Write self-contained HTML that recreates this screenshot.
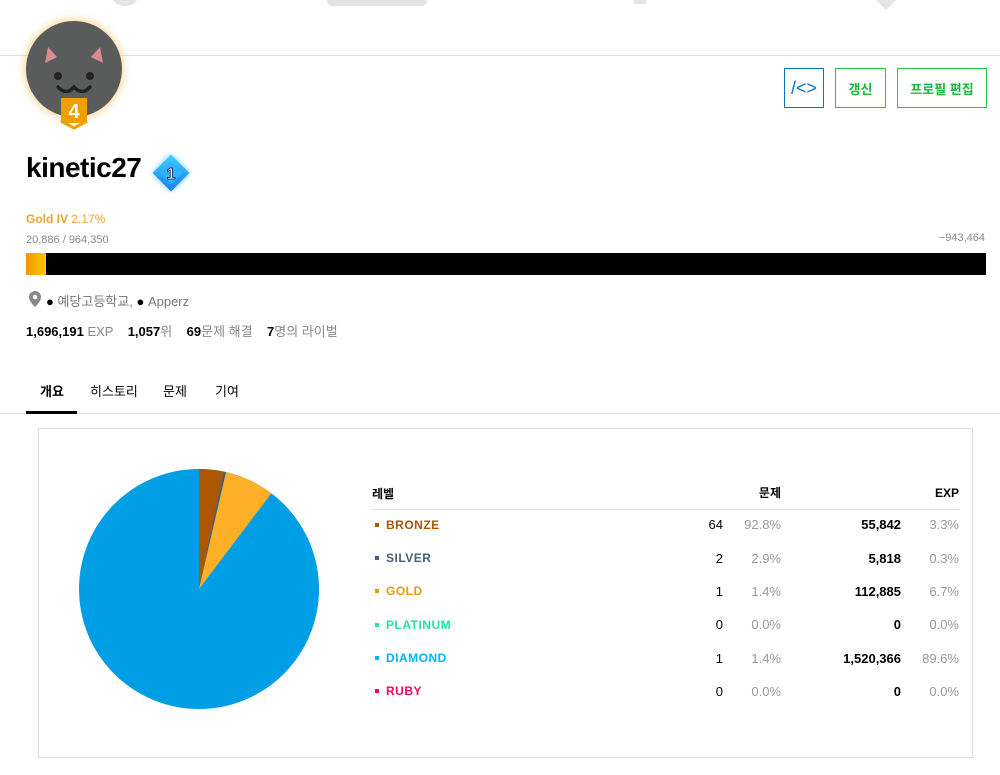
<!DOCTYPE html>
<html><head><meta charset="utf-8"><style>
*{margin:0;padding:0;box-sizing:border-box}
body{width:1000px;height:775px;background:#fff;font-family:"Liberation Sans","Noto Sans CJK KR",sans-serif;position:relative;overflow:hidden;color:#000}
.a{position:absolute;white-space:nowrap}
.btn{position:absolute;top:68px;height:40px;border:1px solid #1fc83e;color:#16b83a;font-size:13px;font-weight:bold;display:flex;align-items:center;justify-content:center}
.r{position:absolute;font-size:13px;line-height:16px;text-align:right}
.g{color:#999}
.nm{position:absolute;left:386px;font-size:12px;font-weight:bold;letter-spacing:.5px}
.bl{position:absolute;left:375px;width:4px;height:4px}
</style></head><body>
<div class="a" style="left:112px;top:-14px;width:26px;height:20px;border-radius:50%;background:#e4e4e4"></div>
<div class="a" style="left:327px;top:-10px;width:100px;height:16px;border-radius:5px;background:#e4e4e4"></div>
<div class="a" style="left:634px;top:0;width:12px;height:4px;background:#e4e4e4"></div>
<div class="a" style="left:876px;top:0;width:0;height:0;border-left:10px solid transparent;border-right:10px solid transparent;border-top:10px solid #e4e4e4"></div>
<div class="a" style="left:0;top:55px;width:1000px;height:1px;background:#ddd"></div>
<div class="a" style="left:26px;top:21px;width:96px;height:96px;border-radius:50%;background:#5a5b5b;box-shadow:0 0 8px 2px rgba(255,190,90,.6)"></div>
<svg class="a" style="left:26px;top:21px" width="96" height="110" viewBox="0 0 96 110">
<polygon points="19,42 22,26 31,36" fill="#d98c8e"/><polygon points="77,42 74,26 65,36" fill="#d98c8e"/>
<circle cx="32" cy="55" r="4" fill="#222"/><circle cx="64" cy="55" r="4" fill="#222"/>
<path d="M32 66 q8 9 16 0 q8 9 16 0" stroke="#222" stroke-width="3.5" fill="none" stroke-linecap="round"/>
<rect x="35" y="77" width="26" height="25" fill="#f19f00"/>
<path d="M35 100 L48 107 L61 100" stroke="#f19f00" stroke-width="3" fill="none"/>
<text x="48" y="97" font-family="Liberation Sans" font-weight="bold" font-size="20" fill="#fff" text-anchor="middle">4</text>
</svg>
<div class="a" style="left:26px;top:152px;font-size:28px;font-weight:bold;letter-spacing:-.5px">kinetic27</div>
<svg class="a" style="left:150px;top:152px" width="42" height="42" viewBox="0 0 42 42">
<defs><linearGradient id="dg" x1="0" y1="0" x2="1" y2="1"><stop offset="0" stop-color="#3ad4ff"/><stop offset="1" stop-color="#1a7cf0"/></linearGradient></defs>
<rect x="8" y="8" width="26" height="26" transform="rotate(45 21 21)" fill="url(#dg)" style="filter:drop-shadow(0 0 3px #5cc8ff)"/>
<rect x="13" y="13" width="16" height="16" transform="rotate(45 21 21)" fill="#2fb3ff"/>
<text x="21" y="27" font-family="Liberation Sans" font-weight="bold" font-size="16" fill="#fff" stroke="#113" stroke-width=".8" text-anchor="middle">1</text>
</svg>
<div class="btn" style="left:784px;width:40px;border-color:#0076c0;color:#0076c0;font-weight:normal;font-size:18px">/&lt;&gt;</div>
<div class="btn" style="left:835px;width:51px">갱신</div>
<div class="btn" style="left:897px;width:90px">프로필 편집</div>
<div class="a" style="left:26px;top:212px;font-size:12px;color:#f0a030"><b>Gold IV</b> 2.17%</div>
<div class="a" style="left:26px;top:234px;font-size:11px;color:#888">20,886 / 964,350</div>
<div class="a" style="right:15px;top:232px;font-size:11px;color:#888">−943,464</div>
<div class="a" style="left:26px;top:253px;width:960px;height:22px;background:#000"></div>
<div class="a" style="left:26px;top:253px;width:20px;height:22px;background:linear-gradient(90deg,#ec9a00,#ffc800)"></div>
<svg class="a" style="left:29px;top:291px" width="12" height="16" viewBox="0 0 12 16"><path d="M6 0a6 6 0 0 0-6 6c0 4.5 6 10 6 10s6-5.5 6-10a6 6 0 0 0-6-6z" fill="#888"/><circle cx="6" cy="6" r="2.3" fill="#fff"/></svg>
<div class="a" style="left:46px;top:291px;font-size:13px;color:#777"><span style="color:#000">●</span> 예당고등학교, <span style="color:#000">●</span> Apperz</div>
<div class="a" style="left:26px;top:321px;font-size:13px;color:#888"><b style="color:#000">1,696,191</b> EXP &nbsp;&nbsp; <b style="color:#000">1,057</b>위 &nbsp;&nbsp; <b style="color:#000">69</b>문제 해결 &nbsp;&nbsp; <b style="color:#000">7</b>명의 라이벌</div>
<div class="a" style="left:40px;top:381px;font-size:13px;font-weight:bold">개요</div>
<div class="a" style="left:90px;top:381px;font-size:13px">히스토리</div>
<div class="a" style="left:163px;top:381px;font-size:13px">문제</div>
<div class="a" style="left:215px;top:381px;font-size:13px">기여</div>
<div class="a" style="left:0;top:413px;width:1000px;height:1px;background:#ddd"></div>
<div class="a" style="left:26px;top:411px;width:51px;height:3px;background:#000"></div>
<div class="a" style="left:38px;top:428px;width:935px;height:330px;border:1px solid #ddd"></div>
<svg class="a" style="left:79px;top:469px" width="240" height="240" viewBox="79 469 240 240">
<circle cx="199" cy="589" r="120" fill="#009ee5"/>
<path d="M199 589 L199 469 A120 120 0 0 1 223.7 471.6 Z" fill="#ad5600"/>
<path d="M199 589 L223.7 471.6 A120 120 0 0 1 226 472.1 Z" fill="#435f7a"/>
<path d="M199 589 L226 472.1 A120 120 0 0 1 271.4 493.3 Z" fill="#ffb028"/>
</svg>
<div class="a" style="left:372px;top:485px;font-size:12px;font-weight:bold">레벨</div>
<div class="r" style="right:219px;top:485px;font-size:12px;font-weight:bold">문제</div>
<div class="r" style="right:41px;top:485px;font-size:12px;font-weight:bold">EXP</div>
<div class="a" style="left:372px;top:509px;width:587px;height:1px;background:#ddd"></div>
<div class="bl" style="top:523px;background:#ad5600"></div><div class="nm" style="top:518px;color:#ad5600">BRONZE</div>
<div class="bl" style="top:556px;background:#435f7a"></div><div class="nm" style="top:551px;color:#435f7a">SILVER</div>
<div class="bl" style="top:589px;background:#ec9a00"></div><div class="nm" style="top:584px;color:#ec9a00">GOLD</div>
<div class="bl" style="top:623px;background:#27e2a4"></div><div class="nm" style="top:618px;color:#27e2a4">PLATINUM</div>
<div class="bl" style="top:656px;background:#00b4fc"></div><div class="nm" style="top:651px;color:#00b4fc">DIAMOND</div>
<div class="bl" style="top:689px;background:#ff0062"></div><div class="nm" style="top:684px;color:#ff0062">RUBY</div>
<div class="r" style="right:277px;top:517px">64</div><div class="r g" style="right:219px;top:517px">92.8%</div><div class="r" style="right:99px;top:517px;font-weight:bold">55,842</div><div class="r g" style="right:41px;top:517px">3.3%</div>
<div class="r" style="right:277px;top:551px">2</div><div class="r g" style="right:219px;top:551px">2.9%</div><div class="r" style="right:99px;top:551px;font-weight:bold">5,818</div><div class="r g" style="right:41px;top:551px">0.3%</div>
<div class="r" style="right:277px;top:584px">1</div><div class="r g" style="right:219px;top:584px">1.4%</div><div class="r" style="right:99px;top:584px;font-weight:bold">112,885</div><div class="r g" style="right:41px;top:584px">6.7%</div>
<div class="r" style="right:277px;top:617px">0</div><div class="r g" style="right:219px;top:617px">0.0%</div><div class="r" style="right:99px;top:617px;font-weight:bold">0</div><div class="r g" style="right:41px;top:617px">0.0%</div>
<div class="r" style="right:277px;top:651px">1</div><div class="r g" style="right:219px;top:651px">1.4%</div><div class="r" style="right:99px;top:651px;font-weight:bold">1,520,366</div><div class="r g" style="right:41px;top:651px">89.6%</div>
<div class="r" style="right:277px;top:684px">0</div><div class="r g" style="right:219px;top:684px">0.0%</div><div class="r" style="right:99px;top:684px;font-weight:bold">0</div><div class="r g" style="right:41px;top:684px">0.0%</div>
</body></html>
